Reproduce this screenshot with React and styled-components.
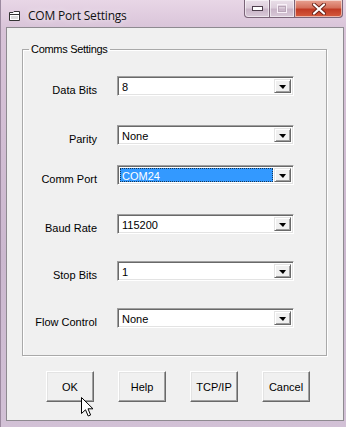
import React from 'react';
import styled, { createGlobalStyle } from 'styled-components';

const GlobalStyle = createGlobalStyle`
    html, body {
        margin: 0;
        padding: 0;
        background: #fff;
    }
`;

const Window = styled.div`
    box-sizing: border-box;
    display: flex;
    flex-direction: column;
    width: 346px;
    height: 427px;
    background: linear-gradient(180deg, #e8d6e6 0%, #d8c3d8 30px, #cbb8cf 60%, #d2c1d6 100%);
    border-left: 1px solid #9c8aa0;
    font-family: "Liberation Sans", Arial, sans-serif;
    font-size: 11px;
    color: #000;
    overflow: hidden;
`;

const TitleBar = styled.div`
    display: flex;
    align-items: flex-start;
    height: 27px;
    flex-shrink: 0;
`;

const TitleLeft = styled.div`
    display: flex;
    align-items: center;
    gap: 7px;
    padding: 7px 0 0 7px;
`;

const TitleText = styled.span`
    font-family: "Open Sans", "Noto Sans", sans-serif;
    font-size: 12px;
    letter-spacing: -0.2px;
    color: #111;
    text-shadow: 0 0 6px rgba(255, 255, 255, 0.9);
`;

const CaptionButtons = styled.div`
    display: flex;
    margin-left: auto;
    margin-right: 3px;
`;

const CaptionButton = styled.div`
    box-sizing: border-box;
    display: flex;
    align-items: center;
    justify-content: center;
    width: ${props => props.w}px;
    height: 18px;
    border: 1px solid #7a6478;
    border-top: none;
    border-left: ${props => (props.first ? '1px solid #7a6478' : 'none')};
    border-radius: ${props => props.radius || '0'};
    background: ${props => props.close
        ? 'linear-gradient(180deg, #e8a393 0%, #d5715c 45%, #c13b24 55%, #d65b3e 100%)'
        : 'linear-gradient(180deg, #eadfe9 0%, #ddcfdc 45%, #c9b5c8 55%, #d9c9d8 100%)'};
    box-shadow: inset 0 0 0 1px rgba(255, 255, 255, 0.55);
`;

const ClientArea = styled.div`
    box-sizing: border-box;
    flex: 1;
    display: flex;
    flex-direction: column;
    margin: 0 2px 6px 5px;
    padding: 15px 0 0 0;
    background: #f0f0f0;
    border: 1px solid #8e8a90;
`;

const GroupBox = styled.fieldset`
    box-sizing: border-box;
    margin: 0 16px 0 15px;
    padding: 0 0 27px 0;
    min-inline-size: 0;
    border: 1px solid #a9a9a9;
    box-shadow: inset 1px 1px 0 #fff, 1px 1px 0 #fff;
`;

const GroupLegend = styled.legend`
    margin-left: 6px;
    padding: 0 2px;
    font-size: 11px;
    line-height: 13px;
    letter-spacing: -0.3px;
`;

const FieldRow = styled.div`
    display: grid;
    grid-template-columns: 74px 177px;
    grid-template-rows: 20px;
    column-gap: 20px;
    align-items: start;
    margin-top: ${props => props.top}px;
`;

const FieldLabel = styled.label`
    text-align: right;
    padding-top: 8px;
    line-height: 13px;
    white-space: nowrap;
`;

const Combo = styled.div`
    box-sizing: border-box;
    display: flex;
    width: 177px;
    height: 20px;
    padding: 2px;
    background: #fff;
    border: 1px solid;
    border-color: #a0a0a0 #fff #fff #a0a0a0;
    box-shadow: inset 1px 1px 0 #696969, inset -1px -1px 0 #e3e3e3;
`;

const ComboValue = styled.div`
    box-sizing: border-box;
    flex: 1;
    margin-right: 1px;
    padding-left: 1px;
    line-height: 14px;
    background: ${props => (props.selected ? '#3399ff' : 'transparent')};
    color: ${props => (props.selected ? '#fff' : '#000')};
    border: 1px ${props => (props.selected ? 'dotted #1a3550' : 'solid transparent')};
`;

const DropButton = styled.div`
    box-sizing: border-box;
    display: flex;
    align-items: center;
    justify-content: center;
    width: 17px;
    background: #f0f0f0;
    border: 1px solid;
    border-color: #e3e3e3 #696969 #696969 #e3e3e3;
    box-shadow: inset 1px 1px 0 #fff, inset -1px -1px 0 #a0a0a0;

    &::after {
        content: '';
        border-left: 4px solid transparent;
        border-right: 3px solid transparent;
        border-top: 4px solid #000;
        margin-top: 1px;
    }
`;

const ButtonRow = styled.div`
    display: flex;
    gap: 24px;
    padding: 15px 0 0 39px;
`;

const PushButton = styled.button`
    position: relative;
    box-sizing: border-box;
    width: 48px;
    height: 31px;
    padding: 0;
    background: #f0f0f0;
    border: 1px solid;
    border-color: #fff #696969 #696969 #fff;
    box-shadow: inset -1px -1px 0 #a0a0a0, inset 1px 1px 0 #e3e3e3;
    font-family: "Liberation Sans", Arial, sans-serif;
    font-size: 11px;
    color: #000;
`;

const Cursor = styled.svg`
    position: absolute;
    left: 34px;
    top: 25px;
    pointer-events: none;
`;

const fields = [
    { label: 'Data Bits', value: '8', top: 20 },
    { label: 'Parity', value: 'None', top: 29 },
    { label: 'Comm Port', value: 'COM24', top: 20, selected: true },
    { label: 'Baud Rate', value: '115200', top: 29 },
    { label: 'Stop Bits', value: '1', top: 27 },
    { label: 'Flow Control', value: 'None', top: 27 },
];

const AppIcon = () => (
    <svg width="13" height="12" viewBox="0 0 13 12">
        <path d="M1.5 2.5 H5 L6 1.5 H11.5 V10.5 H1.5 Z" fill="#fff" stroke="#333" />
        <path d="M1.5 4.5 H11.5" stroke="#333" />
        <path d="M3 6 H10 V9 H3 Z" fill="#dcdcdc" />
    </svg>
);

const App = () => {
    return (
        <>
            <GlobalStyle />
            <Window>
                <TitleBar>
                    <TitleLeft>
                        <AppIcon />
                        <TitleText>COM Port Settings</TitleText>
                    </TitleLeft>
                    <CaptionButtons>
                        <CaptionButton w={26} first radius="0 0 0 4px">
                            <svg width="11" height="5" viewBox="0 0 11 5">
                                <rect x="0.5" y="0.5" width="10" height="4" fill="#fff" stroke="#4e3f4d" />
                            </svg>
                        </CaptionButton>
                        <CaptionButton w={25}>
                            <svg width="10" height="9" viewBox="0 0 10 9">
                                <rect x="0.5" y="0.5" width="9" height="8" fill="none" stroke="#f8f0f8" strokeWidth="1" />
                                <rect x="1.5" y="2.5" width="7" height="5" fill="none" stroke="#b9a6b8" />
                            </svg>
                        </CaptionButton>
                        <CaptionButton w={48} close radius="0 0 4px 0">
                            <svg width="14" height="12" viewBox="0 0 14 12">
                                <path d="M2 1.5 L12 10.5 M12 1.5 L2 10.5" stroke="#6a2218" strokeWidth="4" strokeLinecap="round" />
                                <path d="M2 1.5 L12 10.5 M12 1.5 L2 10.5" stroke="#fff" strokeWidth="2.2" strokeLinecap="round" />
                            </svg>
                        </CaptionButton>
                    </CaptionButtons>
                </TitleBar>

                <ClientArea>
                    <GroupBox>
                        <GroupLegend>Comms Settings</GroupLegend>
                        {fields.map(f => (
                            <FieldRow key={f.label} top={f.top}>
                                <FieldLabel>{f.label}</FieldLabel>
                                <Combo>
                                    <ComboValue selected={f.selected}>{f.value}</ComboValue>
                                    <DropButton />
                                </Combo>
                            </FieldRow>
                        ))}
                    </GroupBox>

                    <ButtonRow>
                        <PushButton>
                            OK
                            <Cursor width="13" height="20" viewBox="0 0 13 20">
                                <path d="M0.5 0.5 V16.5 L4.5 12.8 L7.2 19 L9.6 18 L7 11.8 H12 Z" fill="#fff" stroke="#000" strokeLinejoin="miter" />
                            </Cursor>
                        </PushButton>
                        <PushButton>Help</PushButton>
                        <PushButton>TCP/IP</PushButton>
                        <PushButton>Cancel</PushButton>
                    </ButtonRow>
                </ClientArea>
            </Window>
        </>
    );
};

export default App;
